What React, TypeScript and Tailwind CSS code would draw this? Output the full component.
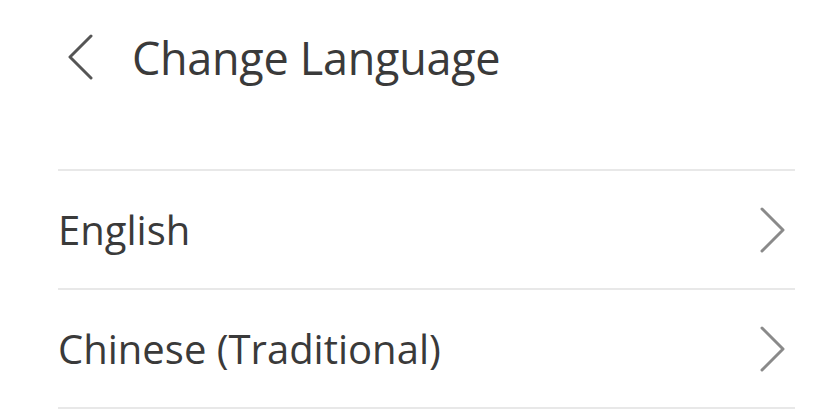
import { useState } from "react";

const languages = ["English", "Chinese (Traditional)"];

const Chevron = ({ dir, className }: { dir: "left" | "right"; className: string }) => (
  <svg viewBox="0 0 26 46" className={className} fill="none" stroke="currentColor" strokeWidth="3" strokeLinecap="round" strokeLinejoin="round">
    {dir === "left" ? <path d="M24 2 L3 23 L24 44" /> : <path d="M2 2 L23 23 L2 44" />}
  </svg>
);

const App = () => {
  const [selected, setSelected] = useState<string | null>(null);

  return (
    <main className="h-[419px] w-[832px] bg-white font-['Open_Sans',sans-serif] text-[#3a3a3a]">
      <div className="flex h-[114px] items-center pl-[67px]">
        <button className="flex h-[46px] w-[27px] items-center text-[#555]">
          <Chevron dir="left" className="h-[46px] w-[26px]" />
        </button>
        <h1 className="ml-[38px] text-[45px] leading-none tracking-[-0.3px]">Change Language</h1>
      </div>
      <ul className="ml-[58px] mt-[55px] w-[737px] border-t-2 border-[#e8e8e8]">
        {languages.map((lang) => (
          <li
            key={lang}
            onClick={() => setSelected(lang)}
            className={`flex h-[119px] items-center justify-between border-b-2 border-[#e8e8e8] pr-[9px] ${
              selected === lang ? "bg-gray-50" : ""
            }`}
          >
            <span className="text-[40px] leading-none">{lang}</span>
            <Chevron dir="right" className="h-[46px] w-[26px] text-[#8a8a8a]" />
          </li>
        ))}
      </ul>
    </main>
  );
};

export default App;
